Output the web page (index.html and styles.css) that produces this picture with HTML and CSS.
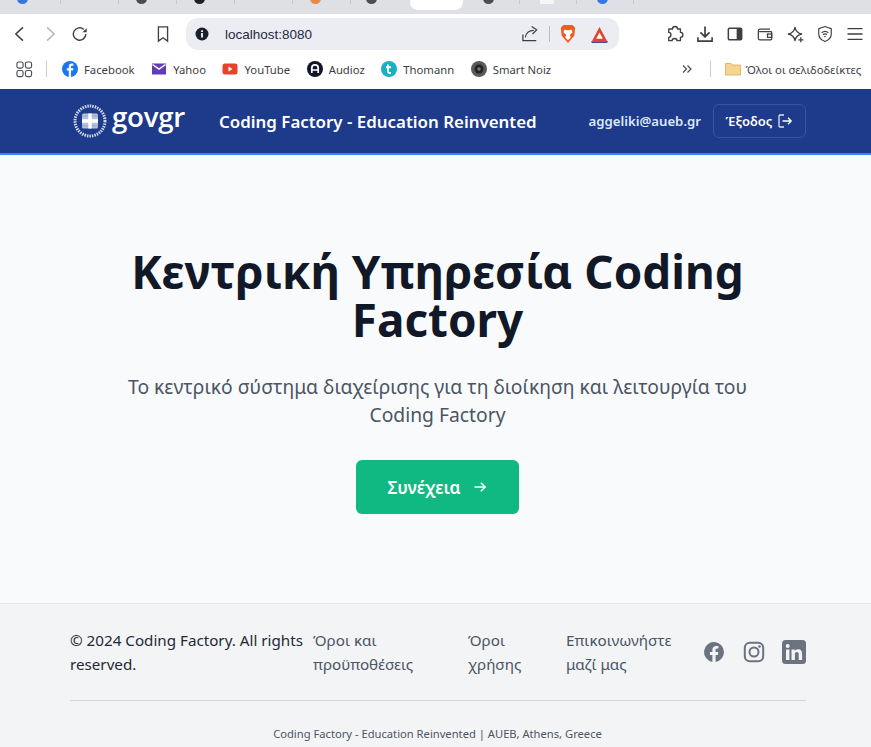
FILE: index.html
```html
<!DOCTYPE html>
<html lang="el">
<head>
<meta charset="utf-8">
<title>Coding Factory</title>
<link rel="stylesheet" href="styles.css">
</head>
<body>
<div class="tabstrip">
  <div class="tabs">
    <span class="tab tab-first"><i class="dot dot-blue"></i></span>
    <span class="tab"></span>
    <span class="tab"><i class="dot dot-dark"></i></span>
    <span class="tab"><i class="dot dot-black"></i></span>
    <span class="tab"></span>
    <span class="tab"><i class="dot dot-orange"></i></span>
    <span class="tab tab-narrow"><i class="dot dot-dark"></i></span>
    <span class="tab-active"></span>
    <span class="tab tab-after"><i class="dot dot-dark"></i></span>
    <span class="tab tab-after"><i class="dot dot-light"></i></span>
    <span class="tab tab-after"><i class="dot dot-blue"></i></span>
  </div>
</div>
<div class="toolbar">
  <div class="nav">
    <svg class="ico" viewBox="0 0 24 24"><path d="M15.5 4 7 12l8.500 8" fill="none" stroke="#3c4043" stroke-width="1.800"/></svg>
    <svg class="ico" viewBox="0 0 24 24"><path d="M8.500 4 17 12l-8.500 8" fill="none" stroke="#b4b6ba" stroke-width="1.800"/></svg>
    <svg class="ico" viewBox="0 0 24 24"><path d="M19 12a7.500 7.500 0 1 1-2.400-5.500" fill="none" stroke="#3c4043" stroke-width="1.700"/><path d="M20 5v5h-5z" fill="#3c4043"/></svg>
  </div>
  <svg class="ico bookmark" viewBox="0 0 24 24"><path d="M6.500 3.500h11v17L12 16.500l-5.500 4z" fill="none" stroke="#3c4043" stroke-width="1.600"/></svg>
  <div class="omnibox">
    <svg class="info" viewBox="0 0 14 14"><circle cx="7" cy="7" r="6.500" fill="#1a1f2b"/><rect x="6.100" y="6" width="1.800" height="4.500" fill="#fff"/><rect x="6.100" y="3.300" width="1.800" height="1.700" fill="#fff"/></svg>
    <span class="url">localhost:8080</span>
    <svg class="ico share" viewBox="0 0 24 24"><path d="M3.500 12.500V20h16" fill="none" stroke="#3c4043" stroke-width="1.500"/><path d="M6.500 16c.5-5 4.500-8.500 10-8.500" fill="none" stroke="#3c4043" stroke-width="1.500"/><path d="M14 3l6 4-5 5" fill="none" stroke="#3c4043" stroke-width="1.500"/></svg>
    <span class="divider"></span>
    <svg class="brave" viewBox="0 0 20 22"><path d="M5 1h10l3 3-1 9-7 8-7-8L2 4z" fill="#f15a22"/><path d="M6 6l4 1 4-1 1 3-3 3 1 3-3 3-3-3 1-3-3-3z" fill="#fff"/></svg>
    <svg class="bat" viewBox="0 0 20 20"><path d="M10 2 18 17H2z" fill="#e0442a"/><path d="M10 8l3.500 6.500h-7z" fill="#fff"/><path d="M1 17h18l-1 2H2z" fill="#5b3f9e"/></svg>
  </div>
  <div class="extensions">
    <svg class="ico" viewBox="0 0 24 24"><path d="M9 6c0-4 6-4 6 0h3.500v4c4 0 4 6 0 6v4h-4c0-3.500-6-3.500-6 0H4.500v-4c3.500 0 3.500-6 0-6V6z" fill="none" stroke="#3c4043" stroke-width="1.600" stroke-linejoin="round"/></svg>
    <svg class="ico" viewBox="0 0 24 24"><path d="M12 3v12M6.500 10l5.500 5.500 5.500-5.500" fill="none" stroke="#3c4043" stroke-width="2"/><path d="M3.500 16v4.500h17V16" fill="none" stroke="#3c4043" stroke-width="2"/></svg>
    <svg class="ico" viewBox="0 0 24 24"><rect x="4" y="5" width="16" height="14" rx="1.500" fill="none" stroke="#3c4043" stroke-width="1.800"/><rect x="14" y="5" width="6" height="14" fill="#3c4043"/></svg>
    <svg class="ico" viewBox="0 0 24 24"><path d="M18 6H6a2 2 0 0 0-2 2v9a2 2 0 0 0 2 2h13a1 1 0 0 0 1-1V10a1 1 0 0 0-1-1H5" fill="none" stroke="#3c4043" stroke-width="1.500"/><rect x="15" y="12" width="5" height="4" fill="none" stroke="#3c4043" stroke-width="1.500"/></svg>
    <svg class="ico" viewBox="0 0 24 24"><path d="M12 4c1 5 3 7 8 8-5 1-7 3-8 8-1-5-3-7-8-8 5-1 7-3 8-8z" fill="none" stroke="#3c4043" stroke-width="1.600" stroke-linejoin="round"/><path d="M19 16v6M16 19h6" stroke="#3c4043" stroke-width="1.500"/></svg>
    <svg class="ico" viewBox="0 0 24 24"><path d="M12 3l7.500 2.500V12c0 4.500-3.500 7.500-7.500 9-4-1.500-7.500-4.500-7.500-9V5.500z" fill="none" stroke="#3c4043" stroke-width="1.400"/><path d="M8 10.500c2.400-2 5.600-2 8 0M9.500 12.800c1.500-1.200 3.500-1.200 5 0" fill="none" stroke="#3c4043" stroke-width="1.300"/><circle cx="12" cy="15" r="1" fill="#3c4043"/></svg>
    <svg class="ico" viewBox="0 0 24 24"><path d="M3 5.500h18M3 12h18M3 18.500h18" stroke="#3c4043" stroke-width="1.600"/></svg>
  </div>
</div>
<div class="bookmarks">
  <svg class="apps" viewBox="0 0 18 18"><g fill="none" stroke="#4a4d52" stroke-width="1.200"><rect x="1" y="1" width="6.500" height="6.500" rx="2"/><rect x="10" y="1" width="6.500" height="6.500" rx="2"/><rect x="1" y="10" width="6.500" height="6.500" rx="2"/><rect x="10" y="10" width="6.500" height="6.500" rx="2"/></g></svg>
  <span class="bm-sep"></span>
  <span class="bm">
    <svg class="fav" viewBox="0 0 16 16"><circle cx="8" cy="8" r="8" fill="#1877f2"/><path d="M9 16V9.500h2l.4-2.300H9V6c0-.8.3-1.200 1.200-1.200h1.200V2.800C11 2.700 10.400 2.600 9.800 2.600 8 2.600 6.800 3.700 6.800 5.700v1.500H4.800v2.300h2V16z" fill="#fff"/></svg>Facebook</span>
  <span class="bm">
    <svg class="fav" viewBox="0 0 16 16"><rect x="1" y="2.500" width="14" height="11" fill="#5f3db5"/><path d="M1.500 3.500 8 8l6.500-4.500" fill="none" stroke="#fff" stroke-width="1.500"/></svg>Yahoo</span>
  <span class="bm">
    <svg class="fav" viewBox="0 0 16 16"><rect x="0.500" y="2.500" width="15" height="11" rx="2.500" fill="#e8412c"/><path d="M6.500 5.500 10.500 8l-4 2.500z" fill="#fff"/></svg>YouTube</span>
  <span class="bm">
    <svg class="fav" viewBox="0 0 16 16"><circle cx="8" cy="8" r="8" fill="#12162b"/><path d="M4.800 12V7a3.200 3.200 0 0 1 6.400 0v5M4.800 9h6.400" fill="none" stroke="#fff" stroke-width="1.700"/></svg>Audioz</span>
  <span class="bm">
    <svg class="fav" viewBox="0 0 16 16"><circle cx="8" cy="8" r="8" fill="#17b1c4"/><path d="M7 3.500V10c0 1.600.9 2.200 3 2M5 6.300h5" fill="none" stroke="#fff" stroke-width="1.900"/></svg>Thomann</span>
  <span class="bm">
    <svg class="fav" viewBox="0 0 16 16"><circle cx="8" cy="8" r="8" fill="#5a5a5c"/><circle cx="8" cy="8" r="4.500" fill="#222"/><circle cx="8" cy="8" r="1.800" fill="#777"/></svg>Smart Noiz</span>
  <span class="more">
    <svg class="chev" viewBox="0 0 12 12"><path d="M2 2.500 5.500 6 2 9.500M6.500 2.500 10 6 6.500 9.500" fill="none" stroke="#4a4d52" stroke-width="1.200"/></svg>
  </span>
  <span class="bm-sep bm-sep-right"></span>
  <span class="bm bm-folder">
    <svg class="fav" viewBox="0 0 16 16"><path d="M0.500 2.500h5.500l1.500 1.500h8v10h-15z" fill="#f6d58e" stroke="#d9a860" stroke-width="0.800"/></svg>Όλοι οι σελιδοδείκτες</span>
</div>
<header class="site-header">
  <div class="brand">
    <svg class="emblem" viewBox="0 0 34 34"><circle cx="17" cy="17" r="15" fill="none" stroke="#cfd8ea" stroke-width="3" stroke-dasharray="1.500 1"/><rect x="9" y="9.500" width="16" height="15" rx="1.500" fill="#b3c3dc"/><path d="M9 12h16M9 22h16" stroke="#8fa5c9" stroke-width="1"/><path d="M17 9.500v15M9 17h16" stroke="#fff" stroke-width="3.400"/></svg>
    <span class="logo-text">govgr</span>
  </div>
  <span class="site-title">Coding Factory - Education Reinvented</span>
  <span class="user">aggeliki@aueb.gr</span>
  <a class="logout">Έξοδος
    <svg class="logout-ico" viewBox="0 0 16 16"><path d="M7 2H3a1 1 0 0 0-1 1v10a1 1 0 0 0 1 1h4" fill="none" stroke="#dbe4f5" stroke-width="1.300"/><path d="M5.500 8H14M11 4.800 14.200 8 11 11.200" fill="none" stroke="#fff" stroke-width="1.300"/></svg>
  </a>
</header>
<main class="hero">
  <h1>Κεντρική Υπηρεσία Coding Factory</h1>
  <p>Το κεντρικό σύστημα διαχείρισης για τη διοίκηση και λειτουργία του Coding Factory</p>
  <a class="cta">Συνέχεια
    <svg class="cta-arrow" viewBox="0 0 16 16"><path d="M2.500 8H13M8.800 3.700 13.200 8l-4.400 4.300" fill="none" stroke="#fff" stroke-width="1.500"/></svg>
  </a>
</main>
<footer class="site-footer">
  <div class="footer-top">
    <span class="copyright">© 2024 Coding Factory. All rights reserved.</span>
    <a class="flink flink-terms">Όροι και προϋποθέσεις</a>
    <a class="flink flink-use">Όροι χρήσης</a>
    <a class="flink flink-contact">Επικοινωνήστε μαζί μας</a>
    <div class="social">
      <svg class="soc" viewBox="0 0 24 24"><path fill="#6b7280" d="M22 12a10 10 0 1 0-11.600 9.900v-7H7.900V12h2.500V9.800c0-2.500 1.500-3.900 3.800-3.900 1.100 0 2.200.2 2.200.2v2.500h-1.300c-1.200 0-1.600.8-1.600 1.600V12h2.800l-.4 2.900h-2.300v7A10 10 0 0 0 22 12z"/></svg>
      <svg class="soc" viewBox="0 0 24 24"><rect x="2.800" y="2.800" width="18.400" height="18.400" rx="5" fill="none" stroke="#6b7280" stroke-width="2"/><circle cx="12" cy="12" r="4.500" fill="none" stroke="#6b7280" stroke-width="2"/><circle cx="17.500" cy="6.500" r="1.300" fill="#6b7280"/></svg>
      <svg class="soc soc-in" viewBox="0 0 24 24"><rect width="24" height="24" rx="3.500" fill="#6b7280"/><rect x="4" y="9.500" width="3.400" height="10.500" fill="#f3f4f6"/><circle cx="5.700" cy="5.900" r="2" fill="#f3f4f6"/><path d="M9.500 9.500h3.200V11c.6-1 1.800-1.800 3.400-1.800 3 0 4 2 4 4.800v6h-3.400v-5.300c0-1.400-.3-2.600-1.800-2.600s-2 1.100-2 2.500V20H9.500z" fill="#f3f4f6"/></svg>
    </div>
  </div>
  <div class="footer-bottom">Coding Factory - Education Reinvented | AUEB, Athens, Greece</div>
</footer>
</body>
</html>
```

FILE: styles.css
```css
* { box-sizing: border-box; }
html, body { margin: 0; padding: 0; }
body {
  width: 871px;
  height: 747px;
  overflow: hidden;
  font-family: "Noto Sans", "Open Sans", sans-serif;
  background: #f9fafb;
}
.tabstrip { height: 14px; background: #dfe0e5; overflow: hidden; }
.tabs { display: flex; height: 14px; align-items: flex-start; }
.tab { width: 58px; height: 4px; border-right: 1px solid #c4c7cc; display: flex; padding-left: 17px; flex: none; }
.tab-first { width: 61px; }
.tab-narrow { width: 59px; border-right: 0; padding-left: 15px; }
.tab-after { width: 57px; padding-left: 20px; }
.tab-active { width: 53px; height: 10px; background: #fff; border-radius: 0 0 8px 8px; flex: none; }
.dot { width: 11px; height: 11px; border-radius: 50%; margin-top: -7px; flex: none; }
.dot-blue { background: #3577e5; }
.dot-dark { background: #4a4d52; }
.dot-black { background: #202124; }
.dot-orange { background: #e98a4a; }
.dot-light { background: #f4f5f7; border-radius: 0; width: 14px; }

.toolbar { height: 38px; background: #fff; display: flex; align-items: center; padding-top: 2px; }
.ico { width: 20px; height: 20px; flex: none; display: block; }
.nav { display: flex; gap: 10px; padding-left: 10px; width: 153px; }
.bookmark { margin-right: 13px; }
.omnibox { width: 433px; height: 32px; background: #ebedf2; border-radius: 12px; display: flex; align-items: center; padding-left: 9px; }
.info { width: 14px; height: 14px; flex: none; }
.url { color: #1f2a44; margin-left: 16px; width: 290px; font-family: "Liberation Sans", sans-serif; font-size: 13.500px; }
.share { margin-left: 5px; }
.divider { width: 1px; height: 16px; background: #b9bcc2; margin: 0 9px; }
.brave { width: 18px; height: 20px; flex: none; }
.bat { width: 19px; height: 19px; margin-left: 13px; flex: none; }
.extensions { display: flex; gap: 10px; margin-left: 46px; }

.bookmarks { height: 37px; background: #fff; display: flex; align-items: center; font-size: 11.300px; color: #3c4043; padding: 0 0 3px 16px; }
.apps { width: 17px; height: 17px; flex: none; }
.bm-sep { width: 1px; height: 16px; background: #c9cbd0; margin-left: 13px; margin-right: 15px; flex: none; }
.bm { display: flex; align-items: center; gap: 6px; margin-right: 16.500px; white-space: nowrap; flex: none; }
.fav { width: 16px; height: 16px; flex: none; }
.more { margin-left: 113px; display: flex; }
.chev { width: 12px; height: 12px; }
.bm-sep-right { margin-left: 17px; margin-right: 14px; }
.bm-folder { margin-right: 0; gap: 5px; }

.site-header {
  height: 66px;
  background: #1e3a8a;
  border-bottom: 2px solid #3b82f6;
  display: flex;
  align-items: center;
  padding: 0 65px 0 73px;
}
.brand { display: flex; align-items: center; width: 146px; flex: none; }
.emblem { width: 34px; height: 34px; flex: none; }
.logo-text { font-family: "Open Sans", sans-serif; font-size: 27.700px; font-weight: 600; color: #fff; margin-left: 5px; margin-top: -9px; letter-spacing: -0.300px; line-height: 1; }
.site-title { font-size: 16.900px; font-weight: 600; color: #fff; white-space: nowrap; }
.user { margin-left: auto; font-size: 13.200px; font-weight: 600; color: #dbeafe; white-space: nowrap; }
.logout {
  margin-left: 12px;
  width: 93px;
  height: 34px;
  border: 1px solid #3a5499;
  border-radius: 6px;
  display: flex;
  align-items: center;
  justify-content: center;
  gap: 5px;
  font-size: 13px;
  font-weight: 600;
  color: #fff;
}
.logout-ico { width: 16px; height: 16px; flex: none; }

.hero {
  height: 448px;
  background: #f9fafb;
  display: flex;
  flex-direction: column;
  align-items: center;
  padding: 92px 0 0 4px;
  text-align: center;
}
.hero h1 {
  margin: 0;
  width: 700px;
  font-size: 45.800px;
  line-height: 48px;
  font-weight: 700;
  color: #111827;
}
.hero p {
  margin: 30px 0 0;
  width: 672px;
  font-size: 19.300px;
  line-height: 28px;
  color: #4b5563;
}
.cta {
  margin-top: 31px;
  width: 163px;
  height: 54px;
  background: #10b981;
  border-radius: 6px;
  color: #fff;
  font-size: 17px;
  font-weight: 600;
  display: flex;
  align-items: center;
  justify-content: center;
  gap: 11px;
}
.cta-arrow { width: 16px; height: 16px; flex: none; }

.site-footer {
  height: 144px;
  background: #f3f4f6;
  border-top: 1px solid #e5e7eb;
  padding: 24px 65px 0 70px;
}
.footer-top {
  display: flex;
  align-items: center;
  height: 73px;
  padding-bottom: 24px;
  border-bottom: 1px solid #d1d5db;
  font-size: 15.200px;
  line-height: 24px;
}
.copyright { width: 243px; color: #1f2937; flex: none; }
.flink { color: #4b5563; flex: none; }
.flink-terms { width: 155px; }
.flink-use { width: 98px; padding-right: 30px; }
.flink-contact { width: 121px; }
.social { display: flex; align-items: center; gap: 16px; margin-left: auto; }
.soc { width: 24px; height: 24px; flex: none; display: block; }
.footer-bottom { margin-top: 25px; text-align: center; font-size: 11.200px; color: #4b5563; line-height: 16px; padding-right: 1px; }
```
